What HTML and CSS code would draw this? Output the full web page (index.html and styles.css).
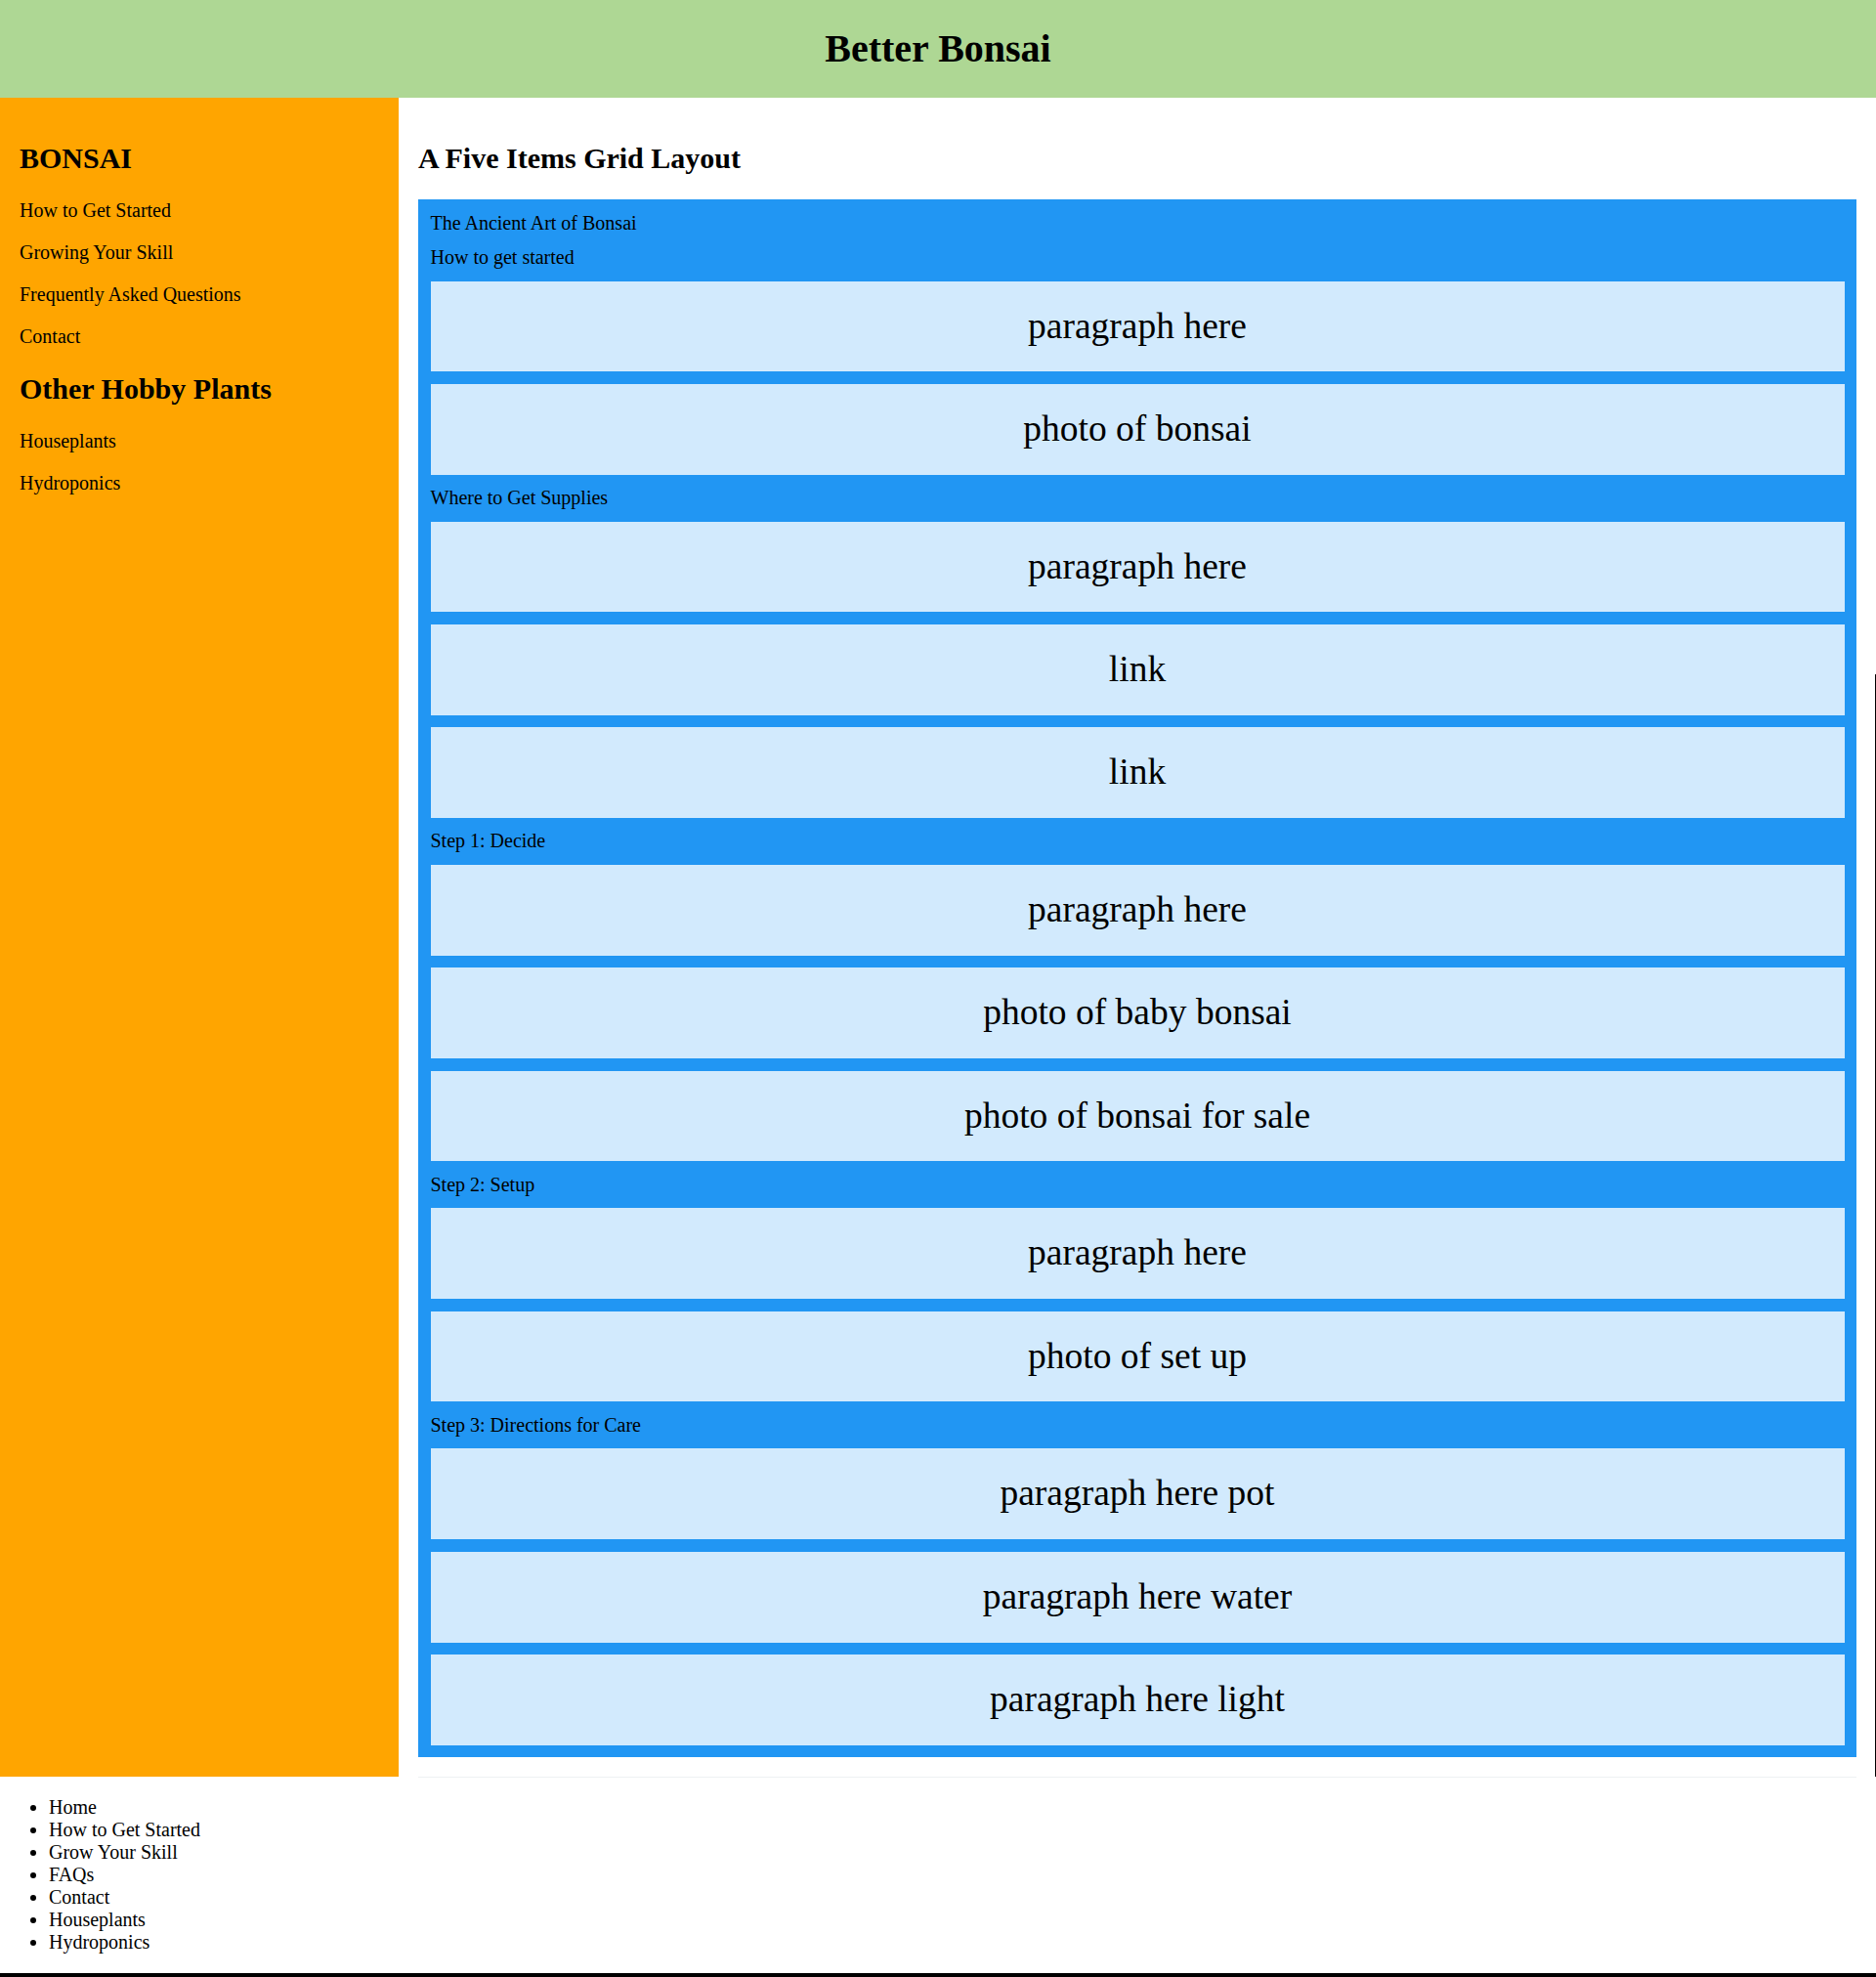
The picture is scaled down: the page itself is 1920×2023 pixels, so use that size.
FILE: index.html
```html
<!DOCTYPE html>
<html lang="en">
<head>
<meta charset="utf-8">
<title>Better Bonsai</title>
<link rel="stylesheet" href="styles.css">
</head>
<body>
<header class="site-header">
  <h1 class="site-title">Better Bonsai</h1>
</header>
<div class="layout">
  <aside class="sidebar">
    <h2 class="side-heading">BONSAI</h2>
    <p class="side-link"><a href="#">How to Get Started</a></p>
    <p class="side-link"><a href="#">Growing Your Skill</a></p>
    <p class="side-link"><a href="#">Frequently Asked Questions</a></p>
    <p class="side-link"><a href="#">Contact</a></p>
    <h2 class="side-heading">Other Hobby Plants</h2>
    <p class="side-link"><a href="#">Houseplants</a></p>
    <p class="side-link"><a href="#">Hydroponics</a></p>
  </aside>
  <main class="main">
    <h2 class="main-heading">A Five Items Grid Layout</h2>
    <div class="grid">
      <div class="label">The Ancient Art of Bonsai</div>
      <div class="label">How to get started</div>
      <div class="cell">paragraph here</div>
      <div class="cell">photo of bonsai</div>
      <div class="label">Where to Get Supplies</div>
      <div class="cell">paragraph here</div>
      <div class="cell">link</div>
      <div class="cell">link</div>
      <div class="label">Step 1: Decide</div>
      <div class="cell">paragraph here</div>
      <div class="cell">photo of baby bonsai</div>
      <div class="cell">photo of bonsai for sale</div>
      <div class="label">Step 2: Setup</div>
      <div class="cell">paragraph here</div>
      <div class="cell">photo of set up</div>
      <div class="label">Step 3: Directions for Care</div>
      <div class="cell">paragraph here pot</div>
      <div class="cell">paragraph here water</div>
      <div class="cell">paragraph here light</div>
    </div>
    <div class="main-rule"></div>
  </main>
</div>
<footer class="site-footer">
  <ul class="footer-list">
    <li>Home</li>
    <li>How to Get Started</li>
    <li>Grow Your Skill</li>
    <li>FAQs</li>
    <li>Contact</li>
    <li>Houseplants</li>
    <li>Hydroponics</li>
  </ul>
  <div class="footer-bar"></div>
</footer>
</body>
</html>
```
FILE: styles.css
```css
html, body {
  margin: 0;
  padding: 0;
}
body {
  font-family: "Liberation Serif", "Times New Roman", serif;
  font-size: 20px;
  line-height: 23px;
  color: #000;
  background: #fff;
}
.site-header {
  height: 100px;
  background: #aed794;
  display: flex;
  align-items: center;
  justify-content: center;
}
.site-title {
  margin: 0;
  font-size: 40px;
  line-height: 46px;
  font-weight: bold;
}
.layout {
  position: relative;
  display: grid;
  grid-template-columns: 408px 1fr;
}
.layout::after {
  content: "";
  position: absolute;
  right: 0;
  top: 590px;
  bottom: 0;
  width: 1px;
  background: #000;
}
.sidebar {
  background: #ffa500;
  padding: 20px;
}
.side-heading,
.main-heading {
  font-size: 30px;
  line-height: 34px;
  font-weight: bold;
  margin: 25px 0;
}
.side-link {
  margin: 20px 0;
}
.side-link a {
  color: #000;
  text-decoration: none;
}
.main {
  padding: 20px 20px 0;
}
.grid {
  display: grid;
  grid-template-columns: 1fr;
  gap: 12.5px;
  padding: 12.5px;
  background: #2196f3;
}
.label {
  font-size: 20px;
  line-height: 23px;
}
.cell {
  background: rgba(255, 255, 255, 0.8);
  text-align: center;
  padding: 25px 0;
  font-size: 37.5px;
  line-height: 42.8px;
}
.main-rule {
  height: 1px;
  margin-top: 20px;
  margin-bottom: -1px;
  background: #eef1f3;
}
.site-footer {
  padding-top: 1px;
}
.footer-list {
  margin: 19px 0 20px;
  padding-left: 50px;
}
.footer-bar {
  height: 12px;
  background: #000;
}
```
